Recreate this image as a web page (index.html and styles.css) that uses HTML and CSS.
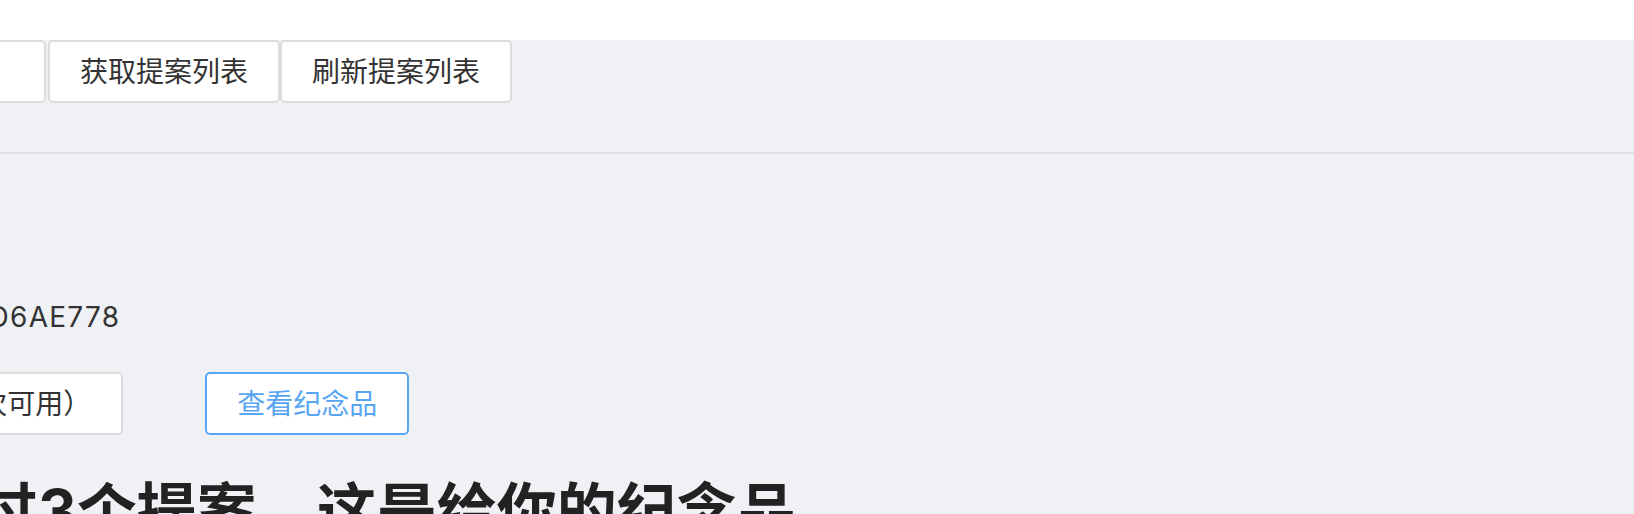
FILE: index.html
```html
<!DOCTYPE html>
<html lang="zh-CN">
<head>
<meta charset="utf-8">
<title>提案投票</title>
<link rel="stylesheet" href="styles.css">
</head>
<body>
  <header class="topbar"></header>
  <main class="main">
    <div class="content">
      <section class="toolbar">
        <input class="field" type="text" placeholder="提案内容">
        <button class="btn">获取提案列表</button>
        <button class="btn">刷新提案列表</button>
      </section>
      <section class="account">
        <p class="address">账户：0x5B3D6AE778</p>
        <div class="actions">
          <button class="btn">领取（剩余3次可用）</button>
          <button class="btn btn-primary">查看纪念品</button>
        </div>
        <h1 class="title">你已投过3个提案，这是给你的纪念品</h1>
      </section>
    </div>
  </main>
</body>
</html>
```
FILE: styles.css
```css
html, body {
  margin: 0;
  padding: 0;
}
body {
  font-family: "Inter", "Noto Sans CJK SC", sans-serif;
  color: #333333;
  background: #f0f1f5;
  overflow: hidden;
  height: 514px;
}
.topbar {
  height: 40px;
  background: #ffffff;
}
.main {
  background: #f0f1f5;
}
.content {
  margin-left: -202px;
}
.toolbar {
  display: flex;
  height: 114px;
  border-bottom: 2px solid #dfe0e4;
  box-sizing: border-box;
}
.field {
  width: 248px;
  height: 63px;
  margin-right: 2px;
  box-sizing: border-box;
  padding: 0 16px;
  font-family: "Inter", "Noto Sans CJK SC", sans-serif;
  font-size: 28px;
  color: #333333;
  background: #ffffff;
  border: 2px solid #dcdcdc;
  border-radius: 5px;
  outline: none;
}
.field::placeholder {
  color: #b0b3b8;
}
.btn {
  font-family: "Inter", "Noto Sans CJK SC", sans-serif;
  font-size: 28px;
  color: #333333;
  background: #ffffff;
  border: 2px solid #dcdcdc;
  border-radius: 5px;
  height: 63px;
  padding: 0 30px;
  box-sizing: border-box;
  line-height: 1;
  white-space: nowrap;
}
.btn-primary {
  color: #58a6f3;
  border-color: #58a6f3;
}
.account {
  padding-top: 143px;
}
.address {
  margin: 0;
  padding-left: 11px;
  font-size: 28px;
  line-height: 40px;
  letter-spacing: 1.25px;
  white-space: nowrap;
}
.actions {
  display: flex;
  gap: 82px;
  margin-top: 35px;
  margin-left: -8px;
}
.title {
  margin: 34px 0 0;
  font-family: "Inter", "Noto Sans CJK SC", sans-serif;
  font-size: 60px;
  font-weight: 700;
  line-height: 84px;
  color: #222222;
  white-space: nowrap;
}
```
